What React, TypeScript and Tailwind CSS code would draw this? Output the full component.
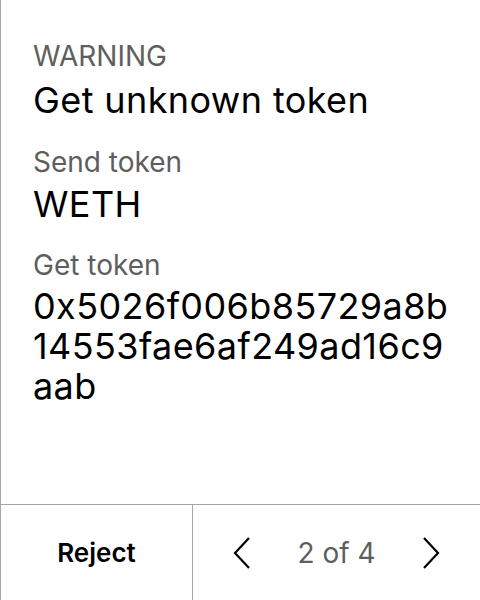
import React from "react";

export default function App() {
  return (
    <div
      className="w-[480px] h-[600px] bg-white flex flex-col border-l border-[#a6a6a6] text-black"
      style={{ fontFamily: "Inter, 'Noto Sans', sans-serif" }}
    >
      <div className="flex-1 pl-[32px] pt-[42px] flex flex-col">
        <div className="text-[28px] leading-[28px] text-[#5e5e5e]">WARNING</div>
        <div className="text-[36px] leading-[40px] tracking-[0.4px] mt-[10px]">Get unknown token</div>
        <div className="text-[28px] leading-[28px] text-[#5e5e5e] mt-[28px]">Send token</div>
        <div className="text-[36px] leading-[40px] tracking-[0.4px] mt-[8px]">WETH</div>
        <div className="text-[28px] leading-[28px] text-[#5e5e5e] mt-[27px]">Get token</div>
        <div className="text-[36px] leading-[40px] tracking-[0.4px] mt-[7px] flex flex-col">
          <span>0x5026f006b85729a8b</span>
          <span>14553fae6af249ad16c9</span>
          <span>aab</span>
        </div>
      </div>
      <div className="h-[96px] border-t border-[#a6a6a6] flex">
        <div className="w-[192px] border-r border-[#a6a6a6] flex items-center justify-center text-[26px] font-semibold">
          Reject
        </div>
        <div className="flex-1 flex items-center justify-center gap-[46px]">
          <svg width="18" height="32" viewBox="0 0 18 32" fill="none" stroke="black" strokeWidth="2.2">
            <path d="M16 1 L2 16 L16 31" />
          </svg>
          <span className="text-[28px] text-[#5e5e5e]">2 of 4</span>
          <svg width="18" height="32" viewBox="0 0 18 32" fill="none" stroke="black" strokeWidth="2.2">
            <path d="M2 1 L16 16 L2 31" />
          </svg>
        </div>
      </div>
    </div>
  );
}
